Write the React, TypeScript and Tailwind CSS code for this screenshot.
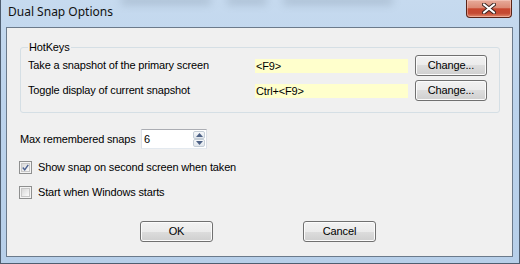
import React from 'react';

function WinButton({ label, className = '' }: { label: string; className?: string }) {
  return (
    <button
      type="button"
      className={`h-[21px] rounded-[3px] border border-[#707070] bg-[linear-gradient(to_bottom,#f2f2f2_0%,#ebebeb_50%,#dddddd_50%,#cfcfcf_100%)] shadow-[inset_0_0_0_1px_#fbfbfb] text-[11px] leading-[19px] text-black ${className}`}
    >
      {label}
    </button>
  );
}

function CheckBox({ checked, label }: { checked: boolean; label: string }) {
  return (
    <div className="flex items-center gap-[6px] -ml-[1px] h-[14px]">
      <div className="w-[13px] h-[13px] border border-[#8e8f8f] bg-[#f4f4f4] p-[1px]">
        <div className="w-full h-full border border-[#c8c8c8] bg-[linear-gradient(135deg,#d8d8d8,#fbfbfb)] flex items-center justify-center">
          {checked && (
            <svg width="9" height="9" viewBox="0 0 9 9">
              <path d="M1 4.5 L3.5 7.5 L8 1" fill="none" stroke="#4a5f8f" strokeWidth="1.8" />
            </svg>
          )}
        </div>
      </div>
      <span className="leading-[13px]">{label}</span>
    </div>
  );
}

function HotkeyRow({ label, value }: { label: string; value: string }) {
  return (
    <div className="flex items-center h-[21px]">
      <span className="flex-1 leading-[13px]">{label}</span>
      <div className="w-[153px] h-[14px] bg-[#ffffcc] pl-[1px] leading-[14px]">{value}</div>
      <WinButton label="Change..." className="ml-[7px] w-[72px]" />
    </div>
  );
}

export default function App() {
  return (
    <div className="w-[520px] h-[264px] relative overflow-hidden border-x border-b border-[#4f5e70] bg-[linear-gradient(to_bottom,#c6daef_0%,#bcd3ec_40%,#b7cfe9_100%)] font-['Liberation_Sans',Arial,sans-serif] text-[11px] tracking-[-0.15px] text-black">
      {/* blurred window behind the glass */}
      <div className="absolute left-[120px] -top-[4px] w-[300px] h-[9px] flex gap-[16px] opacity-20 blur-[4px]">
        <div className="w-[90px] bg-[#4a5a6c]" />
        <div className="w-[40px] bg-[#4a5a6c]" />
        <div className="w-[110px] bg-[#4a5a6c]" />
      </div>

      <div className="relative h-[27px] flex items-start justify-between">
        <div className="pl-[7px] pt-[4px] leading-[16px] text-[12px] tracking-normal font-['Noto_Sans',sans-serif] text-[#111]">
          Dual Snap Options
        </div>
        <div className="mr-[7px] w-[46px] h-[18px] rounded-b-[4px] border border-t-0 border-[#5a2418] bg-[linear-gradient(to_bottom,#e7ab9b_0%,#dc8a75_45%,#c8472f_52%,#c44a33_78%,#e28a6c_100%)] shadow-[inset_0_0_0_1px_rgba(255,220,210,0.45)] flex items-center justify-center">
          <svg width="14" height="11" viewBox="0 0 14 11">
            <path d="M2 1.5 L12 9.5 M12 1.5 L2 9.5" stroke="#3b2420" strokeWidth="4" strokeLinecap="round" />
            <path d="M2 1.5 L12 9.5 M12 1.5 L2 9.5" stroke="#ffffff" strokeWidth="2.2" strokeLinecap="round" />
          </svg>
        </div>
      </div>

      <div className="ml-[5px] w-[507px] h-[230px] border border-[#6b7a8b] bg-[#f0f0f0] pt-[13px] pl-[13px] pr-[12px] flex flex-col">
        <fieldset className="border border-[#d5dfe5] rounded-[3px] pl-[7px] pr-[12px] pb-[11px]">
          <legend className="px-[1px] leading-[13px]">HotKeys</legend>
          <div className="flex flex-col gap-[4px] mt-[1px]">
            <HotkeyRow label="Take a snapshot of the primary screen" value="<F9>" />
            <HotkeyRow label="Toggle display of current snapshot" value="Ctrl+<F9>" />
          </div>
        </fieldset>

        <div className="mt-[16px] flex items-center h-[20px]">
          <span className="w-[121px] leading-[13px]">Max remembered snaps</span>
          <div className="w-[66px] h-[20px] border border-[#abadb3] border-b-[#e3e9ef] border-x-[#dbdfe6] bg-white flex">
            <span className="flex-1 pl-[2px] leading-[18px]">6</span>
            <div className="w-[14px] flex flex-col p-[1px]">
              <div className="flex-1 rounded-[2px] border border-[#c4cdd6] bg-[linear-gradient(to_bottom,#f6f8fa,#e0e6ec)] flex items-center justify-center">
                <svg width="7" height="4" viewBox="0 0 7 4">
                  <path d="M0 4 L3.5 0 L7 4 Z" fill="#4d6185" />
                </svg>
              </div>
              <div className="flex-1 rounded-[2px] border border-[#c4cdd6] bg-[linear-gradient(to_bottom,#f6f8fa,#e0e6ec)] flex items-center justify-center">
                <svg width="7" height="4" viewBox="0 0 7 4">
                  <path d="M0 0 L7 0 L3.5 4 Z" fill="#4d6185" />
                </svg>
              </div>
            </div>
          </div>
        </div>

        <div className="mt-[11px]">
          <CheckBox checked label="Show snap on second screen when taken" />
        </div>
        <div className="mt-[11px]">
          <CheckBox checked={false} label="Start when Windows starts" />
        </div>

        <div className="mt-[22px] flex pl-[120px] gap-[90px]">
          <WinButton label="OK" className="w-[73px]" />
          <WinButton label="Cancel" className="w-[73px]" />
        </div>
      </div>
    </div>
  );
}
